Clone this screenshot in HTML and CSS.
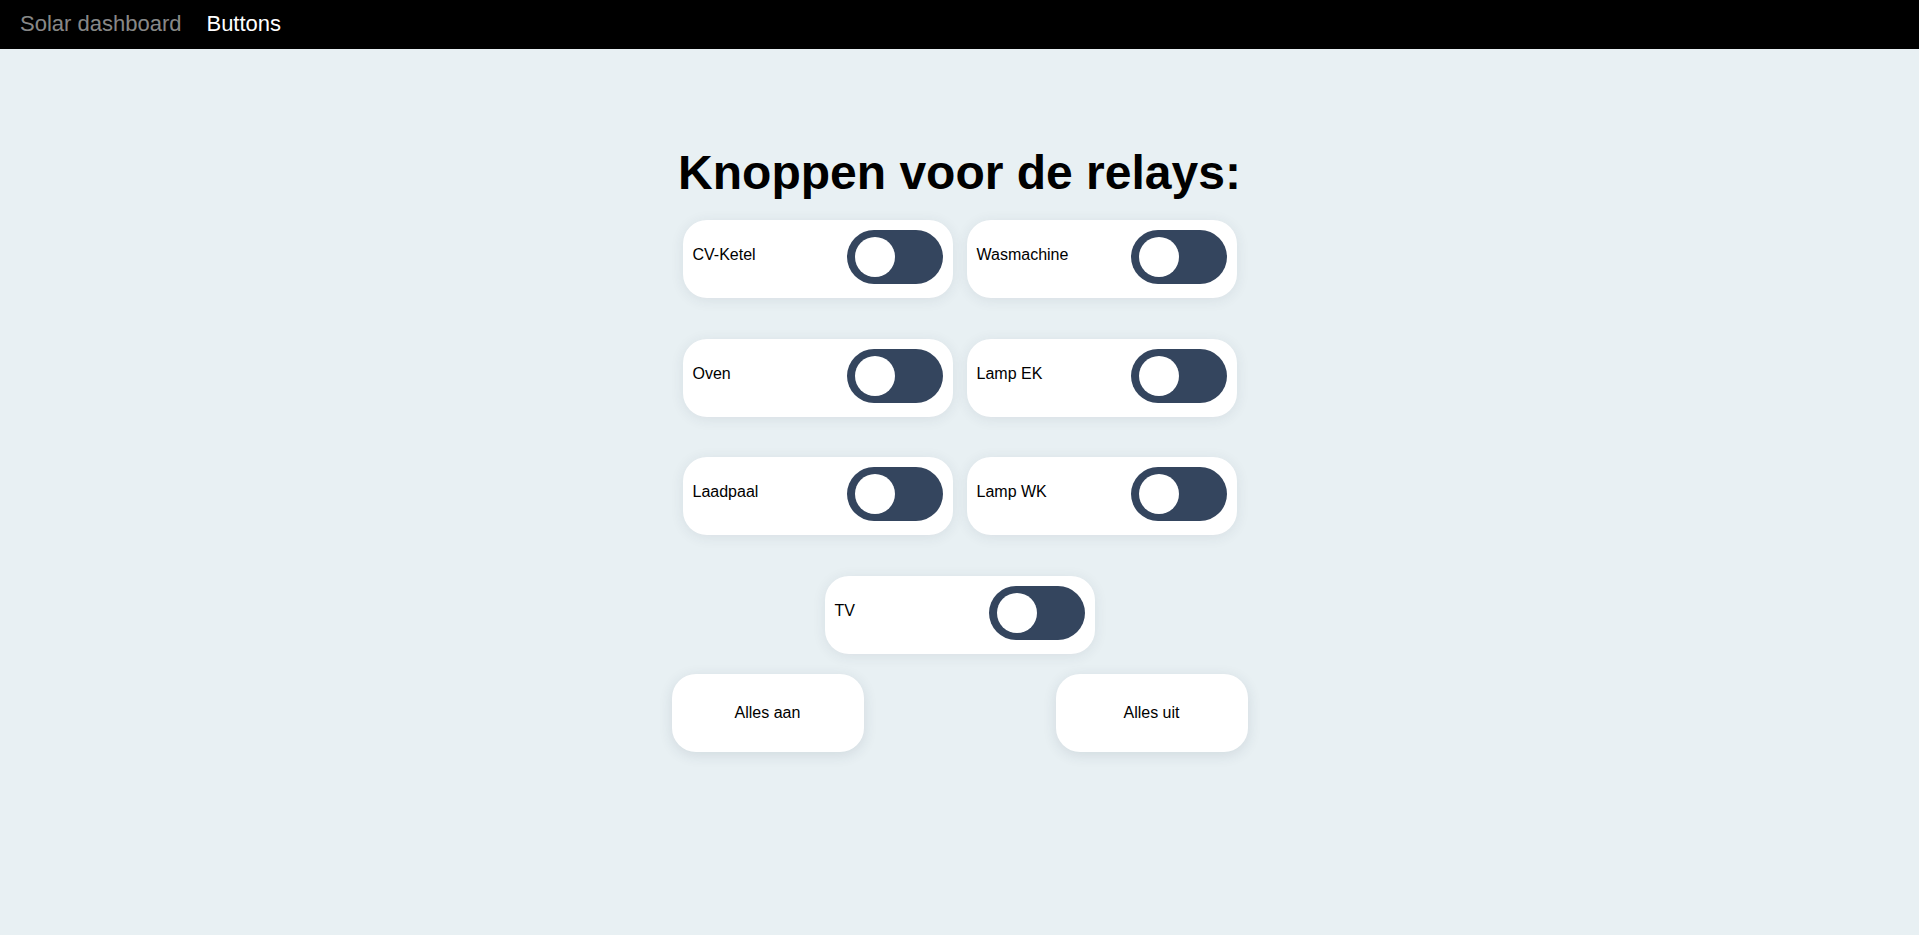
FILE: index.html
```html
<!DOCTYPE html>
<html lang="nl">
<head>
<meta charset="utf-8">
<title>Buttons</title>
<link rel="stylesheet" href="styles.css">
</head>
<body>
<nav class="navbar">
  <a class="nav-link" href="#">Solar dashboard</a>
  <a class="nav-link active" href="#">Buttons</a>
</nav>
<main class="page">
  <h1 class="title">Knoppen voor de relays:</h1>
  <div class="relay-grid">
    <div class="relay-card"><span class="relay-label">CV-Ketel</span><span class="switch"><span class="knob"></span></span></div>
    <div class="relay-card"><span class="relay-label">Wasmachine</span><span class="switch"><span class="knob"></span></span></div>
    <div class="relay-card"><span class="relay-label">Oven</span><span class="switch"><span class="knob"></span></span></div>
    <div class="relay-card"><span class="relay-label">Lamp EK</span><span class="switch"><span class="knob"></span></span></div>
    <div class="relay-card"><span class="relay-label">Laadpaal</span><span class="switch"><span class="knob"></span></span></div>
    <div class="relay-card"><span class="relay-label">Lamp WK</span><span class="switch"><span class="knob"></span></span></div>
  </div>
  <div class="relay-card single"><span class="relay-label">TV</span><span class="switch"><span class="knob"></span></span></div>
  <div class="actions">
    <button class="action-btn" type="button">Alles aan</button>
    <button class="action-btn" type="button">Alles uit</button>
  </div>
</main>
</body>
</html>
```
FILE: styles.css
```css
html, body {
  margin: 0;
  padding: 0;
}
body {
  background: #e8f0f3;
  font-family: "Liberation Sans", Arial, sans-serif;
  color: #000;
  min-height: 935px;
}
.navbar {
  height: 49px;
  box-sizing: border-box;
  padding: 0 0 2px 20px;
  background: #000;
  display: flex;
  align-items: center;
  gap: 25px;
}
.nav-link {
  font-size: 22px;
  line-height: 25px;
  color: rgba(255, 255, 255, 0.55);
  text-decoration: none;
}
.nav-link.active {
  color: #fff;
}
.page {
  display: flex;
  flex-direction: column;
  align-items: center;
}
.title {
  margin: 96px 0 20px;
  font-size: 48px;
  line-height: 55px;
  font-weight: bold;
}
.relay-grid {
  display: grid;
  grid-template-columns: 270px 270px;
  column-gap: 14px;
  row-gap: 40.5px;
}
.relay-card {
  width: 270px;
  height: 78px;
  box-sizing: border-box;
  padding: 10px 10px 14px 10px;
  background: #fff;
  border-radius: 24px;
  box-shadow: 0 2px 14px rgba(40, 60, 80, 0.09);
  display: flex;
  align-items: center;
  justify-content: space-between;
}
.relay-card.single {
  margin-top: 41px;
}
.relay-label {
  font-size: 16px;
  line-height: 18px;
  margin-bottom: 4px;
}
.switch {
  width: 96px;
  height: 54px;
  border-radius: 27px;
  background: #34455e;
  display: flex;
  align-items: center;
  padding-left: 8px;
  box-sizing: border-box;
}
.knob {
  width: 40px;
  height: 40px;
  border-radius: 50%;
  background: #fff;
}
.actions {
  width: 576px;
  display: flex;
  justify-content: space-between;
  margin-top: 20px;
}
.action-btn {
  width: 192px;
  height: 78px;
  border: none;
  border-radius: 24px;
  background: #fff;
  box-shadow: 0 3px 14px rgba(40, 60, 80, 0.12);
  font-family: "Liberation Sans", Arial, sans-serif;
  font-size: 16px;
  color: #000;
  padding: 0;
}
```
